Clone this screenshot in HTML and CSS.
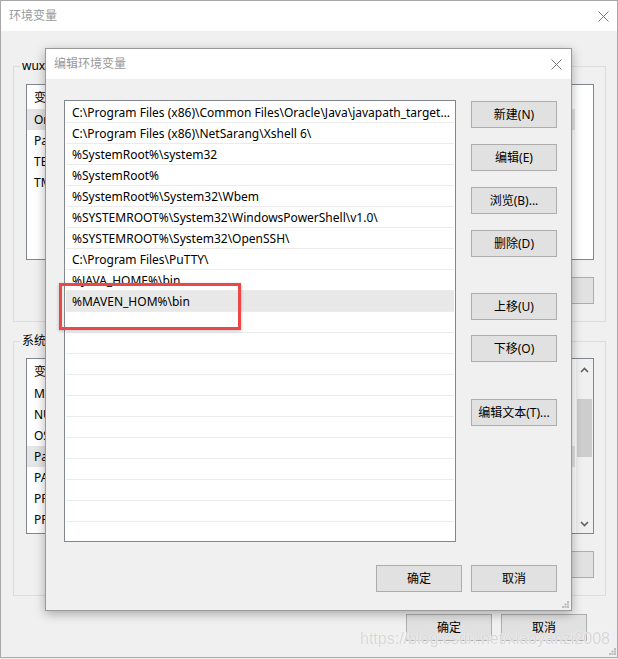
FILE: index.html
```html
<!DOCTYPE html>
<html lang="zh-CN">
<head>
<meta charset="utf-8">
<title>环境变量</title>
<link rel="stylesheet" href="styles.css">
</head>
<body>
<div class="outer">
  <div class="titlebar">
    <span class="title">环境变量</span>
    <svg class="close" width="11" height="11" viewBox="0 0 11 11"><path d="M0.5 0.5L10.5 10.5M10.5 0.5L0.5 10.5" stroke="#7a7a7a" stroke-width="1" fill="none"/></svg>
  </div>
  <div class="outer-body">
    <fieldset class="group g1">
      <legend>wuxiaoyanzi 的用户变量(U)</legend>
      <div class="vlist">
        <div class="vitems no-scroll">
          <div class="vhead"><span class="c1">变量</span><span class="c2">值</span></div>
          <div class="vrow sel"><span class="c1">OneDrive</span><span class="c2">C:\Users\wuxiaoyanzi\OneDrive</span></div>
          <div class="vrow"><span class="c1">Path</span><span class="c2">%USERPROFILE%\AppData\Local\Microsoft\WindowsApps;</span></div>
          <div class="vrow"><span class="c1">TEMP</span><span class="c2">%USERPROFILE%\AppData\Local\Temp</span></div>
          <div class="vrow"><span class="c1">TMP</span><span class="c2">%USERPROFILE%\AppData\Local\Temp</span></div>
        </div>
      </div>
      <div class="btnrow">
        <button class="btn">新建(N)...</button>
        <button class="btn">编辑(E)...</button>
        <button class="btn">删除(D)</button>
      </div>
    </fieldset>
    <fieldset class="group g2">
      <legend>系统变量(S)</legend>
      <div class="vlist">
        <div class="vitems">
          <div class="vhead"><span class="c1">变量</span><span class="c2">值</span></div>
          <div class="vrow"><span class="c1">MAVEN_HOME</span><span class="c2">D:\apache-maven-3.6.0</span></div>
          <div class="vrow"><span class="c1">NUMBER_OF_PROCESSORS</span><span class="c2">4</span></div>
          <div class="vrow"><span class="c1">OS</span><span class="c2">Windows_NT</span></div>
          <div class="vrow sel"><span class="c1">Path</span><span class="c2">C:\Program Files (x86)\Common Files\Oracle\Java;</span></div>
          <div class="vrow"><span class="c1">PATHEXT</span><span class="c2">.COM;.EXE;.BAT;.CMD;.VBS;.VBE;.JS;.JSE</span></div>
          <div class="vrow"><span class="c1">PROCESSOR_ARCHITECTURE</span><span class="c2">AMD64</span></div>
          <div class="vrow"><span class="c1">PROCESSOR_IDENTIFIER</span><span class="c2">Intel64 Family 6 Model 142</span></div>
        </div>
        <div class="scrollbar">
          <svg class="chev" width="9" height="6" viewBox="0 0 9 6"><path d="M1 5L4.5 1.5L8 5" stroke="#606060" stroke-width="1.6" fill="none"/></svg>
          <div class="track"><div class="thumb"></div></div>
          <svg class="chev" width="9" height="6" viewBox="0 0 9 6"><path d="M1 1L4.5 4.5L8 1" stroke="#606060" stroke-width="1.6" fill="none"/></svg>
        </div>
      </div>
      <div class="btnrow">
        <button class="btn">新建(W)...</button>
        <button class="btn">编辑(I)...</button>
        <button class="btn">删除(L)</button>
      </div>
    </fieldset>
    <div class="footer">
      <button class="btn">确定</button>
      <button class="btn">取消</button>
    </div>
  </div>
  <svg class="grip grip-outer" width="7" height="7" viewBox="0 0 7 7"><g fill="#bdbdbd"><rect x="5" y="0" width="2" height="2"/><rect x="2.5" y="2.5" width="2" height="2"/><rect x="5" y="2.5" width="2" height="2"/><rect x="0" y="5" width="2" height="2"/><rect x="2.5" y="5" width="2" height="2"/><rect x="5" y="5" width="2" height="2"/></g></svg>
</div>

<div class="dialog">
  <div class="dtitle">
    <span class="title">编辑环境变量</span>
    <svg class="close" width="11" height="11" viewBox="0 0 11 11"><path d="M0.5 0.5L10.5 10.5M10.5 0.5L0.5 10.5" stroke="#7a7a7a" stroke-width="1" fill="none"/></svg>
  </div>
  <div class="dbody">
    <div class="dmain">
      <div class="plist">
        <div class="prows">
          <div class="prow">C:\Program Files (x86)\Common Files\Oracle\Java\javapath_target_1160125</div>
          <div class="prow">C:\Program Files (x86)\NetSarang\Xshell 6\</div>
          <div class="prow">%SystemRoot%\system32</div>
          <div class="prow">%SystemRoot%</div>
          <div class="prow">%SystemRoot%\System32\Wbem</div>
          <div class="prow">%SYSTEMROOT%\System32\WindowsPowerShell\v1.0\</div>
          <div class="prow">%SYSTEMROOT%\System32\OpenSSH\</div>
          <div class="prow">C:\Program Files\PuTTY\</div>
          <div class="prow">%JAVA_HOME%\bin</div>
          <div class="prow sel">%MAVEN_HOM%\bin</div>
        </div>
      </div>
      <div class="dbuttons">
        <button class="btn b1">新建(N)</button>
        <button class="btn b2">编辑(E)</button>
        <button class="btn b3">浏览(B)...</button>
        <button class="btn b4">删除(D)</button>
        <button class="btn b5">上移(U)</button>
        <button class="btn b6">下移(O)</button>
        <button class="btn b7">编辑文本(T)...</button>
      </div>
    </div>
    <div class="dfooter">
      <button class="btn">确定</button>
      <button class="btn">取消</button>
    </div>
  </div>
  <svg class="grip grip-inner" width="7" height="7" viewBox="0 0 7 7"><g fill="#bdbdbd"><rect x="5" y="0" width="2" height="2"/><rect x="2.5" y="2.5" width="2" height="2"/><rect x="5" y="2.5" width="2" height="2"/><rect x="0" y="5" width="2" height="2"/><rect x="2.5" y="5" width="2" height="2"/><rect x="5" y="5" width="2" height="2"/></g></svg>
</div>

<div class="redbox"></div>
<div class="watermark">https://blog.csdn.net/xiaoyanzi2008</div>
</body>
</html>
```
FILE: styles.css
```css
html, body {
  margin: 0;
  padding: 0;
}
body {
  width: 618px;
  height: 659px;
  background: #f0f0f0;
  position: relative;
  overflow: hidden;
  font-family: "Noto Sans", "Noto Sans CJK SC", sans-serif;
  font-size: 12px;
  color: #000;
}

.btn {
  width: 86px;
  height: 27px;
  box-sizing: border-box;
  background: #e1e1e1;
  border: 1px solid #adadad;
  border-radius: 0;
  padding: 0;
  margin: 0;
  font-family: "Noto Sans", "Noto Sans CJK SC", sans-serif;
  font-size: 12px;
  color: #000;
  line-height: 25px;
  text-align: center;
}

.title {
  color: #999;
  font-size: 12px;
  line-height: 16px;
}
.close {
  display: block;
}

/* outer window */
.outer {
  width: 618px;
  height: 658px;
  box-sizing: border-box;
  border: 1px solid #a8a8a8;
  background: #f0f0f0;
  position: relative;
  display: flex;
  flex-direction: column;
}
.titlebar {
  height: 30px;
  flex: none;
  background: #fff;
  display: flex;
  align-items: center;
  justify-content: space-between;
  padding: 0 8px 0 8px;
}
.outer-body {
  padding: 0 11px 0 12px;
  display: flex;
  flex-direction: column;
}
.group {
  margin: 0;
  border: 1px solid #dcdcdc;
  padding: 11px 11px 17px 12px;
  min-width: 0;
}
.group legend {
  padding: 0 2px;
  margin-left: -6px;
  line-height: 16px;
  font-size: 12px;
}
.g1 { margin-top: 27px; padding-top: 10px; }
.g2 { margin-top: 11px; padding-top: 9px; }

.vlist {
  height: 176px;
  box-sizing: border-box;
  border: 1px solid #82878f;
  background: #fff;
  display: flex;
}
.vitems {
  flex: 1;
  min-width: 0;
  padding: 0 1px 0 0;
}
.vitems.no-scroll {
  padding-right: 18px;
}
.vhead {
  height: 24px;
  display: flex;
  align-items: center;
  padding-left: 7px;
}
.vrow {
  height: 21px;
  display: flex;
  align-items: center;
  padding-left: 7px;
  white-space: nowrap;
}
.vrow.sel { background: #e5e5e5; }
.c1 { width: 190px; flex: none; }
.c2 { flex: none; }

.scrollbar {
  width: 17px;
  flex: none;
  background: #f0f0f0;
  display: flex;
  flex-direction: column;
  align-items: center;
  padding: 8px 0 6px;
  box-sizing: border-box;
}
.track {
  flex: 1;
  width: 15px;
  padding-top: 26px;
  padding-bottom: 64px;
  display: flex;
}
.thumb {
  flex: 1;
  background: #cdcdcd;
}

.btnrow {
  margin-top: 17px;
  display: flex;
  justify-content: flex-end;
  gap: 9px;
}
.footer {
  margin-top: 18px;
  padding-right: 19px;
  display: flex;
  justify-content: flex-end;
  gap: 9px;
}
.grip {
  position: absolute;
  display: block;
}
.grip-outer { right: 1px; bottom: 2px; }
.grip-inner { right: 2px; bottom: 2px; }

/* edit dialog */
.dialog {
  position: absolute;
  left: 45px;
  top: 48px;
  width: 527px;
  height: 563px;
  box-sizing: border-box;
  border: 1px solid #999;
  background: #f0f0f0;
  box-shadow: 0 3px 10px rgba(0, 0, 0, 0.3);
  display: flex;
  flex-direction: column;
}
.dtitle {
  height: 30px;
  flex: none;
  background: #fff;
  display: flex;
  align-items: center;
  justify-content: space-between;
  padding: 0 9px 0 8px;
}
.dbody {
  flex: 1;
  display: flex;
  flex-direction: column;
  padding: 21px 14px 18px 18px;
}
.dmain {
  display: flex;
  gap: 15px;
  height: 442px;
}
.plist {
  flex: 1;
  min-width: 0;
  box-sizing: border-box;
  border: 1px solid #82878f;
  background: #fff;
  padding: 1px 1px 0;
  overflow: hidden;
}
.prows {
  height: 100%;
  background: repeating-linear-gradient(to bottom, #fff 0, #fff 20px, #ebebeb 20px, #ebebeb 21px);
}
.prow {
  height: 20px;
  margin-bottom: 1px;
  line-height: 21px;
  padding: 0 2px 0 6px;
  white-space: nowrap;
  overflow: hidden;
  text-overflow: ellipsis;
}
.prow.sel { background: #e8e8e8; }

.dbuttons {
  width: 86px;
  flex: none;
  display: flex;
  flex-direction: column;
}
.b1 { margin-top: 1px; }
.b2, .b3, .b4 { margin-top: 16px; }
.b5 { margin-top: 36px; }
.b6 { margin-top: 15px; }
.b7 { margin-top: 37px; }

.dfooter {
  margin-top: 23px;
  display: flex;
  justify-content: flex-end;
  gap: 9px;
}

/* annotation overlays */
.redbox {
  position: absolute;
  left: 59px;
  top: 283px;
  width: 182px;
  height: 47px;
  box-sizing: border-box;
  border: 3px solid #ee4646;
  box-shadow: 0 1px 3px rgba(0, 0, 0, 0.25);
}
.watermark {
  position: absolute;
  left: 360px;
  top: 631px;
  font-family: "Liberation Sans", sans-serif;
  font-size: 16px;
  line-height: 16px;
  color: #d6d6d6;
  text-shadow: 0 0 1px #fff, 0 0 1px #fff;
  white-space: nowrap;
}
```
